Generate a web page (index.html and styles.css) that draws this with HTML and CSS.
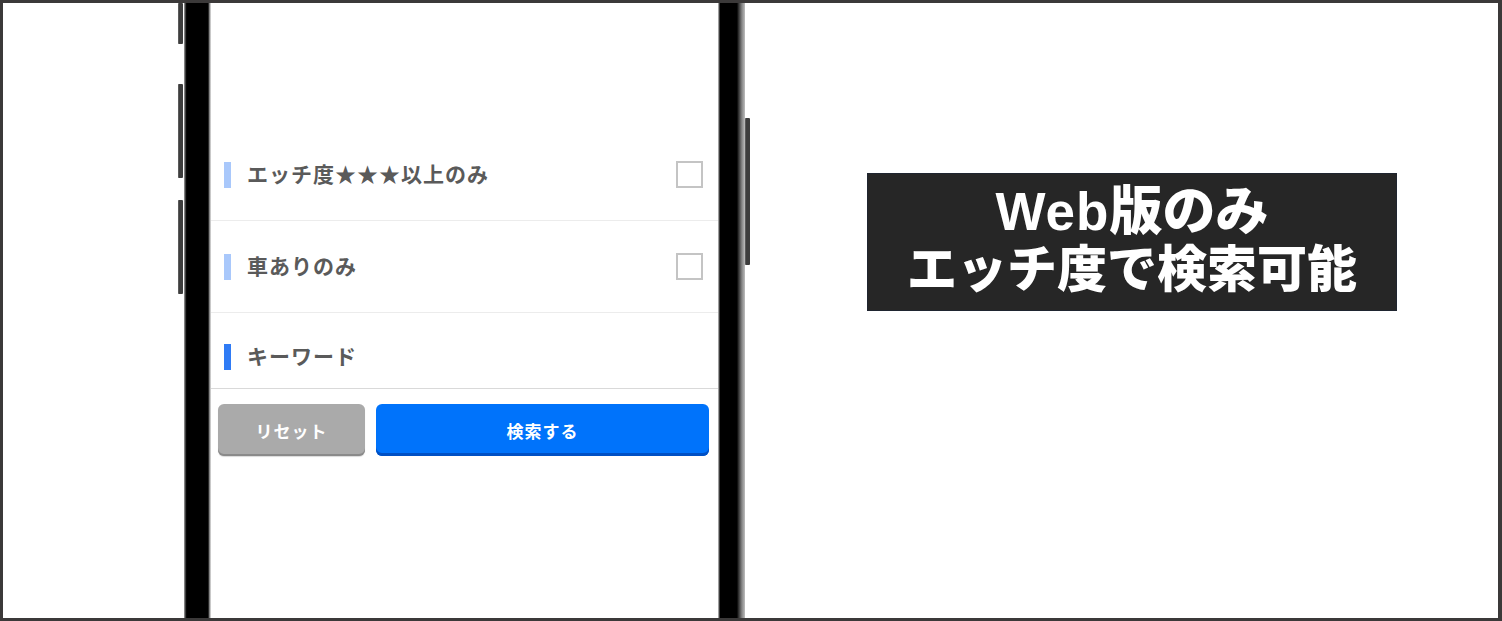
FILE: index.html
```html
<!DOCTYPE html>
<html lang="ja">
<head>
<meta charset="utf-8">
<link rel="stylesheet" href="styles.css">
</head>
<body>
<div class="frame">
  <div class="lead"></div>
  <div class="phone">
    <div class="side side-left">
      <span class="btn b1"></span>
      <span class="btn b2"></span>
      <span class="btn b3"></span>
    </div>
    <div class="bezel bezel-left"></div>
    <div class="screen">
      <div class="spacer"></div>
      <div class="row">
        <span class="bar light"></span>
        <span class="label">エッチ度★★★以上のみ</span>
        <span class="check"></span>
      </div>
      <div class="row">
        <span class="bar light"></span>
        <span class="label">車ありのみ</span>
        <span class="check"></span>
      </div>
      <div class="row row-kw">
        <span class="bar strong"></span>
        <span class="label">キーワード</span>
      </div>
      <div class="actions">
        <button class="reset">リセット</button>
        <button class="search">検索する</button>
      </div>
    </div>
    <div class="bezel bezel-right"></div>
    <div class="side side-right">
      <span class="btn b4"></span>
    </div>
  </div>
  <div class="promo">
    <div class="banner">
      <div class="line line1"><span class="latin">Web</span>版のみ</div>
      <div class="line">エッチ度で検索可能</div>
    </div>
  </div>
</div>
</body>
</html>
```

FILE: styles.css
```css
* { box-sizing: border-box; margin: 0; padding: 0; }
html, body { width: 1502px; height: 621px; overflow: hidden; background: #fff; }
body { font-family: "Noto Sans CJK JP", "Noto Sans", sans-serif; }

.frame {
  width: 1502px;
  height: 621px;
  border-style: solid;
  border-color: #3b3939;
  border-width: 3px 4px 3px 3px;
  display: flex;
  background: #fff;
}

.lead { width: 175px; flex: none; }

.phone { display: flex; flex: none; height: 100%; }

.side { width: 6px; display: flex; flex-direction: column; flex: none; }
.side .btn {
  display: block;
  width: 5px;
  background: #3d3d3d;
  border-radius: 1px;
  border-left: 1px solid #5a5a5a;
}
.b1 { height: 41px; }
.b2 { height: 94px; margin-top: 40px; }
.b3 { height: 94px; margin-top: 22px; }
.b4 { height: 147px; margin-top: 115px; }

.bezel { width: 27px; background: #000; flex: none; }
.bezel-left {
  background: linear-gradient(to right, #9a9a9a 0, #6a6a6a 1px, #111 2px, #000 3px, #000 24px, #555 25px, #b5b5b5 26px, #dcdcdc 27px);
}
.bezel-right {
  background: linear-gradient(to right, #c8c8c8 0, #777 1px, #000 2px, #000 19px, #222 20px, #555 22px, #888 24px, #aaa 26px, #c0c0c0 27px);
}

.screen {
  width: 507px;
  flex: none;
  background: #fff;
  display: flex;
  flex-direction: column;
}
.spacer { height: 126px; flex: none; }

.row {
  height: 92px;
  flex: none;
  display: flex;
  align-items: center;
  padding: 0 15px 0 13px;
  border-bottom: 1px solid #ececec;
}
.row-kw { height: 76px; padding-top: 12px; border-bottom: 1px solid #d9d9d9; }

.bar { width: 7px; height: 26px; flex: none; margin-right: 16px; }
.bar.light { background: #a9c8fb; }
.bar.strong { background: #2f7bf5; }

.label {
  font-size: 21px;
  font-weight: 700;
  color: #5a5a5a;
  letter-spacing: 1px;
  flex: 1;
  margin-bottom: 4px;
}

.check {
  width: 27px;
  height: 27px;
  border: 2px solid #c4c4c4;
  flex: none;
}

.actions {
  display: flex;
  gap: 11px;
  padding: 15px 9px 0 7px;
}
.actions button {
  height: 52px;
  border: none;
  border-radius: 6px;
  color: #fff;
  font-family: "Noto Sans CJK JP", "Noto Sans", sans-serif;
  font-size: 17px;
  font-weight: 700;
  letter-spacing: 1px;
}
.reset {
  width: 147px;
  background: #aaaaaa;
  color: #f2f2f2;
  box-shadow: inset 0 -2px 0 #8a8a8a, 0 1px 1px rgba(0,0,0,0.15);
}
.search {
  flex: 1;
  background: #0073fb;
  box-shadow: inset 0 -3px 0 #0050c4;
}

.promo {
  flex: 1;
  padding: 170px 0 0 116px;
}
.banner {
  width: 530px;
  height: 138px;
  background: #262626;
  border: 1px solid #1f2530;
  color: #fff;
  font-family: "Liberation Sans", "Noto Sans CJK JP", sans-serif;
  font-weight: 900;
  font-size: 50px;
  line-height: 58px;
  text-align: center;
  padding-top: 9px;
}
.line { white-space: nowrap; }
.line1 { font-size: 53px; }
.latin { letter-spacing: 1px; }
```
